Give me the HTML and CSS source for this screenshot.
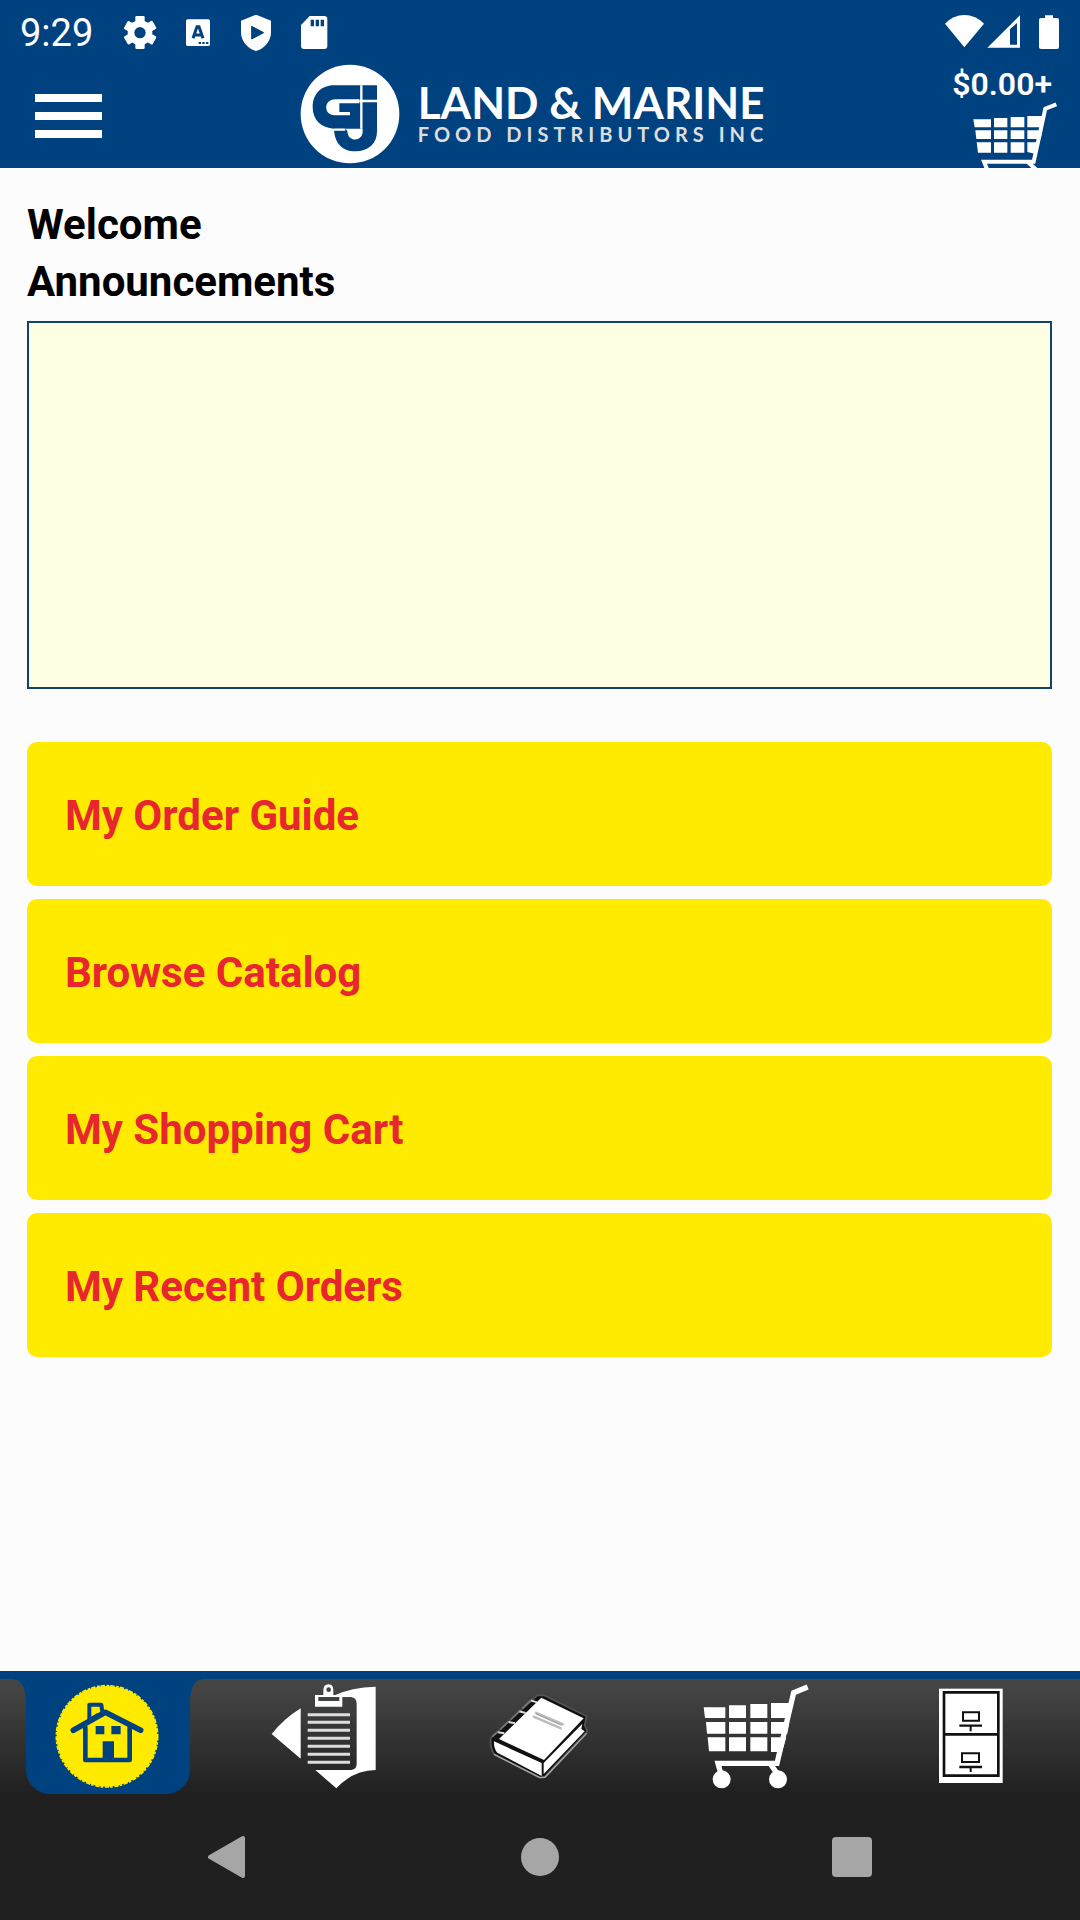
FILE: index.html
```
<!DOCTYPE html>
<html lang="en">
<head>
    <meta charset="utf-8">
    <meta name="viewport" content="width=device-width, initial-scale=1">
    <title>Land &amp; Marine Food Distributors</title>
    <link rel="stylesheet" href="styles.css">
</head>
<body>
    <header class="header">
        <div class="status">
            <span class="clock">9:29</span>
            <div class="status-icons">
                <!-- settings -->
                <svg width="36" height="36" viewBox="366 42 108 108">
                    <g fill="#fff">
                        <rect x="406" y="45" width="28" height="99" rx="4"/>
                        <rect x="406" y="45" width="28" height="99" rx="4" transform="rotate(60 420 95)"/>
                        <rect x="406" y="45" width="28" height="99" rx="4" transform="rotate(120 420 95)"/>
                        <circle cx="420" cy="95" r="37"/>
                    </g>
                    <circle cx="420" cy="95" r="17" fill="#004280"/>
                </svg>
                <!-- keyboard -->
                <svg width="36" height="36" viewBox="540 42 108 108">
                    <rect x="558" y="55" width="72" height="80" rx="5" fill="#fff"/>
                    <path d="M579 112L591 77H597L609 112M584 102H604" fill="none" stroke="#004280" stroke-width="9"/>
                    <path d="M596 123h7v6h-7zM607 123h7v6h-7zM618 123h7v6h-7z" fill="#004280"/>
                </svg>
                <!-- protect -->
                <svg width="36" height="36" viewBox="714 42 108 108">
                    <path d="M768 41L813 59V94C813 122 792 144 768 150C744 144 723 122 723 94V59Z" fill="#fff"/>
                    <path d="M755 76L791 95L755 114Z" fill="#004280" stroke="#004280" stroke-width="3" stroke-linejoin="round"/>
                </svg>
                <!-- sd card -->
                <svg width="36" height="36" viewBox="888 42 108 108">
                    <path d="M929 45H973Q982 45 982 54V135Q982 144 973 144H912Q903 144 903 135V72Z" fill="#fff"/>
                    <path d="M932 56h10v20h-10zM947 56h10v20h-10zM962 56h10v20h-10z" fill="#004280"/>
                </svg>
            </div>
            <div class="signal-icons">
                <svg width="40" height="36" viewBox="132 42 120 108">
                    <path d="M135 68Q160 42 193 42Q227 42 252 68L193 139Z" fill="#fff"/>
                </svg>
                <svg width="36" height="36" viewBox="258 42 108 108">
                    <path fill-rule="evenodd" d="M262 140L360 43V140ZM330 84V131H351V66Z" fill="#fff"/>
                </svg>
                <svg width="36" height="36" viewBox="372 42 108 108">
                    <path d="M435 43H459V51H471Q477 51 477 57V138Q477 144 471 144H423Q417 144 417 138V57Q417 51 423 51H435Z" fill="#fff"/>
                </svg>
            </div>
        </div>

        <div class="toolbar">
            <button type="button" class="menu" aria-label="Menu">
                <span></span>
                <span></span>
                <span></span>
            </button>
            <div class="logo">
                <svg width="100" height="100" viewBox="58 42 300 300">
                    <circle cx="208" cy="192" r="148" fill="#fff"/>
                    <path d="M289 106H160C120 106 96 134 96 171C96 210 122 234 160 236C161 276 182 304 224 304C265 304 289 280 289 244Z" fill="#004280"/>
                    <path d="M236 148H164C128 148 128 196 162 196H208V186H176V160H236Z" fill="#fff"/>
                    <path d="M242 106V236M160 239H194M236 153H290" fill="none" stroke="#fff" stroke-width="7"/>
                    <path d="M194 236H246V244C246 277 200 277 200 242Z" fill="#fff"/>
                </svg>
                <div class="brand">
                    <div class="brand-name">LAND &amp; MARINE</div>
                    <div class="brand-sub">FOOD DISTRIBUTORS INC</div>
                </div>
            </div>
            <a href="#cart" class="cart" aria-label="Shopping cart">
                <span class="total">$0.00+</span>
                <svg width="90" height="68" viewBox="210 300 270 204">
                    <g fill="#fff">
                        <path d="M220 358H273V382H224ZM282 354H322V382H282ZM332 351H373V382H332ZM382 348H428L424 382H382Z"/>
                        <path d="M226 391H273V417H229ZM282 391H322V417H282ZM332 391H373V417H332ZM382 391H427L422 417H382Z"/>
                        <path d="M230 427H273V458H234ZM282 427H322V458H282ZM332 427H373V458H332ZM382 427H418L408 462L382 456Z"/>
                    </g>
                    <path d="M469 313L436 326L401 485H252L262 510M384 487L410 510" fill="none" stroke="#fff" stroke-width="12"/>
                </svg>
            </a>
        </div>
    </header>

    <main class="content">
        <h1>Welcome</h1>
        <h2>Announcements</h2>
        <section class="announcements" aria-label="Announcements"></section>
        <div class="links">
            <button type="button">My Order Guide</button>
            <button type="button">Browse Catalog</button>
            <button type="button">My Shopping Cart</button>
            <button type="button">My Recent Orders</button>
        </div>
    </main>

    <nav class="tabs">
        <a href="#home" class="active" aria-label="Home">
            <svg width="120" height="115" viewBox="144 57 360 345">
                <circle cx="321" cy="229" r="151" fill="#ffeb00"/>
                <circle cx="321" cy="229" r="152" fill="none" stroke="#ffeb00" stroke-width="5" stroke-dasharray="13 5 8 3"/>
                <g fill="none" stroke="#004280" stroke-width="12" stroke-linejoin="round" stroke-linecap="round">
                    <path d="M256 202V300H389V202" stroke-width="14"/>
                    <path d="M220 211L316 157L422 211" stroke-width="17"/>
                    <path d="M268 182V134H304L307 156M268 182L291 166"/>
                </g>
                <path d="M287 198h26v25h-26zM334 198h28v25h-28zM308 244h34v56h-34z" fill="#004280"/>
            </svg>
        </a>
        <a href="#order-guide" aria-label="My Order Guide">
            <svg width="120" height="115" viewBox="42 27 360 345">
                <path d="M152 115V266L65 192Q102 146 152 115Z" fill="#fff"/>
                <path d="M248 78Q306 51 377 50V300Q310 300 259 355L196 300H304Q320 298 320 282V101Q320 83 303 81H278Z" fill="#fff"/>
                <path d="M195 75H220V62Q220 43 236 43Q250 43 250 62V75H277V110H195Z" fill="#fff"/>
                <path d="M205 81h63v12h-63z" fill="#404343"/>
                <circle cx="236" cy="59" r="7" fill="#404343"/>
                <path d="M173 134H300M173 157H300M173 181H300M173 205H300M173 229H300M173 253H300M173 277H300" stroke="#ddd" stroke-width="9"/>
            </svg>
        </a>
        <a href="#catalog" aria-label="Browse Catalog">
            <svg width="120" height="115" viewBox="30 27 360 345">
                <path d="M62 204L202 76L222 76L350 139L344 165L352 184L222 323L206 322L72 252Q60 235 62 204Z" fill="#111" stroke="#555" stroke-width="5"/>
                <path d="M214 83L341 145L222 270L87 207Z" fill="#fff"/>
                <path d="M72 214L215 279V318L82 248Q71 236 72 214Z" fill="#fff"/>
                <path d="M221 279L337 161L334 177L344 184L221 312Z" fill="#fff"/>
                <path d="M72 253L210 323L226 321L350 190" fill="none" stroke="#aaa" stroke-width="4"/>
                <path d="M83 187L103 190M115 156L135 160M147 124L167 129M182 91L201 97" stroke="#ddd" stroke-width="6"/>
                <path d="M67 200L84 184M91 178L115 155M123 148L148 123M157 115L181 92" stroke="#777" stroke-width="5"/>
                <path d="M195 127L281 164M189 139L275 176" stroke="#bbb" stroke-width="7"/>
                <path d="M198 132L275 166" stroke="#777" stroke-width="2"/>
            </svg>
        </a>
        <a href="#cart" aria-label="My Shopping Cart">
            <svg width="120" height="115" viewBox="18 27 360 345">
                <g fill="#fff">
                    <path d="M41 112H106V144H45ZM117 106H168V144H117ZM181 102H232V144H181ZM243 99H302L300 144H243Z"/>
                    <path d="M48 156H106V191H51ZM117 156H168V191H117ZM181 156H232V191H181ZM243 156H298L292 191H243Z"/>
                    <path d="M53 202H106V244H57ZM117 202H168V244H117ZM181 202H232V244H181ZM243 202H289L276 246H243Z"/>
                    <circle cx="95" cy="328" r="27"/>
                    <circle cx="264" cy="328" r="27"/>
                </g>
                <path d="M353 51L311 68L261 280H84L92 310M241 281L262 312" fill="none" stroke="#fff" stroke-width="16"/>
            </svg>
        </a>
        <a href="#recent-orders" aria-label="My Recent Orders">
            <svg width="120" height="115" viewBox="-24 27 360 345">
                <rect x="57" y="56" width="191" height="283" fill="#fff"/>
                <path d="M72 67H235V317H72ZM72 193H235" fill="none" stroke="#111" stroke-width="8"/>
                <path d="M129 127H177V152H129ZM126 250H177V276H126Z" fill="none" stroke="#111" stroke-width="6"/>
                <path d="M118 167H186M118 291H186" stroke="#111" stroke-width="7"/>
                <path d="M152 167V184M152 291V306" stroke="#111" stroke-width="6"/>
            </svg>
        </a>
    </nav>

    <div class="system-nav">
        <button type="button" aria-label="Back">
            <svg width="40" height="44" viewBox="0 0 40 44">
                <path d="M2 22L35 3V41Z" fill="#a6a6a6" stroke="#a6a6a6" stroke-width="4" stroke-linejoin="round"/>
            </svg>
        </button>
        <button type="button" aria-label="Home screen">
            <svg width="40" height="44" viewBox="0 0 40 44">
                <circle cx="20" cy="22" r="19" fill="#a6a6a6"/>
            </svg>
        </button>
        <button type="button" aria-label="Overview">
            <svg width="40" height="44" viewBox="0 0 40 44">
                <rect x="0" y="2" width="40" height="40" rx="4" fill="#a6a6a6"/>
            </svg>
        </button>
    </div>
</body>
</html>
```
FILE: styles.css
```
* {
    box-sizing: border-box;
}
body {
    display: flex;
    flex-direction: column;
    min-height: 100vh;
    margin: 0;
    background-color: #fcfcfc;
    color: #000;
    font-family: Roboto, "Liberation Sans", sans-serif;
}
button {
    border: 0;
    padding: 0;
    background: none;
    font-family: inherit;
    cursor: pointer;
}
svg {
    display: block;
}

/* header */
.header {
    background-color: #004280;
    color: #fff;
}
.status {
    display: flex;
    align-items: center;
    height: 64px;
    padding: 2px 20px 0;
}
.clock {
    width: 102px;
    font-size: 38px;
}
.status-icons {
    display: flex;
    gap: 22px;
}
.signal-icons {
    display: flex;
    gap: 2px;
    margin-left: auto;
}
.toolbar {
    display: grid;
    grid-template-columns: 1fr auto 1fr;
    height: 104px;
    overflow: hidden;
}
.menu {
    display: flex;
    flex-direction: column;
    gap: 10px;
    width: 67px;
    margin: 30px 0 0 35px;
}
.menu span {
    width: 100%;
    height: 8px;
    background-color: #fff;
}
.logo {
    display: flex;
    align-items: flex-start;
    gap: 18px;
    margin-right: 12px;
}
.brand {
    padding-top: 16px;
    font-family: Lato, sans-serif;
    white-space: nowrap;
}
.brand-name {
    font-size: 44px;
    font-weight: 700;
    line-height: 44px;
}
.brand-sub {
    color: #ddd;
    font-size: 20px;
    font-weight: 700;
    letter-spacing: 5px;
    line-height: 20px;
}
.cart {
    display: flex;
    flex-direction: column;
    align-items: flex-end;
    padding-right: 20px;
    color: #fff;
    text-decoration: none;
}
.total {
    padding: 4px 8px 0 0;
    font-size: 32px;
    font-weight: 600;
    line-height: 32px;
}
.cart svg {
    flex: none;
}

/* content */
.content {
    flex: 1;
    padding: 28px 28px 28px 27px;
}
h1,
h2 {
    margin: 0;
    font-size: 42px;
    font-weight: 700;
    line-height: 57px;
}
.announcements {
    height: 368px;
    margin-top: 11px;
    border: 2px solid #0f426f;
    background-color: #ffffe4;
}
.links {
    display: flex;
    flex-direction: column;
    gap: 13px;
    margin-top: 53px;
}
.links button {
    height: 144px;
    padding: 2px 38px 0;
    border-radius: 10px;
    background-color: #ffeb00;
    color: #e8262d;
    font-size: 42px;
    font-weight: 700;
    text-align: left;
}

/* bottom tabs */
.tabs {
    display: grid;
    grid-template-columns: repeat(5, 1fr);
    border-top: 8px solid #004280;
    background: linear-gradient(#474747, #202020);
}
.tabs a {
    position: relative;
    display: flex;
    justify-content: center;
}
.tabs .active {
    margin: 0 26px;
    border-radius: 0 0 24px 24px;
    background-color: #004280;
}
.tabs .active::before,
.tabs .active::after {
    content: "";
    position: absolute;
    top: 0;
    width: 12px;
    height: 20px;
}
.tabs .active::before {
    right: 100%;
    background: radial-gradient(ellipse 12px 20px at 0 100%, transparent 96%, #004280);
}
.tabs .active::after {
    left: 100%;
    background: radial-gradient(ellipse 12px 20px at 100% 100%, transparent 96%, #004280);
}

/* system buttons */
.system-nav {
    display: flex;
    align-items: center;
    justify-content: space-between;
    height: 126px;
    padding: 0 208px;
    background-color: #202020;
}
```
